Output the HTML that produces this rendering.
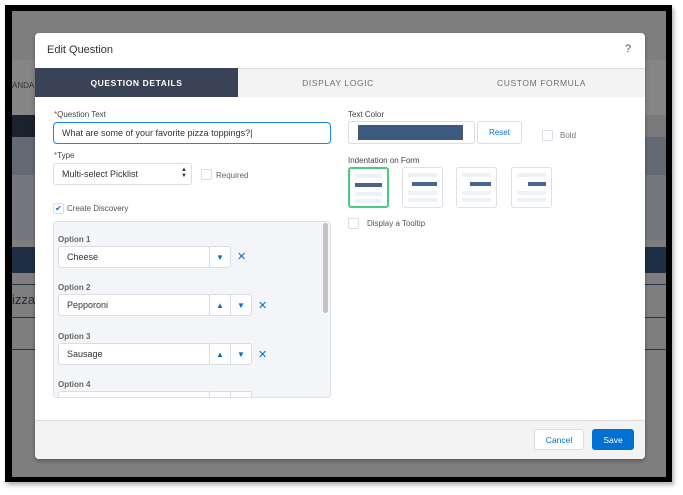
<!DOCTYPE html>
<html><head><style>
*{box-sizing:border-box;margin:0;padding:0}
body{width:683px;height:495px;background:#fff;position:relative;overflow:hidden;font-family:"Liberation Sans",sans-serif;color:#3e3e3c}
.a{position:absolute}
.frame{left:5px;top:5px;width:667px;height:477px;background:#000;box-shadow:2px 3px 4px rgba(0,0,0,.3)}
.bg{left:12px;top:11px;width:654px;height:466px;background:#7e7e7e;overflow:hidden}
.lbl{font-size:8px;color:#444}
.req{color:#c23934}
.inp{background:#fff;border:1px solid #d8dde6;border-radius:3px;font-size:9px;padding-left:8px;display:flex;align-items:center;color:#333}
.cb{width:11px;height:11px;border:1px solid #d8dde6;border-radius:2px;background:#fff}
.btn{background:#fff;border:1px solid #d8dde6;display:flex;align-items:center;justify-content:center}
.x{color:#0070d2;font-size:11px}
.ind{width:41px;height:41px;border:1px solid #dde1e8;border-radius:3px;background:#fff}
.ind i{position:absolute;height:4px;background:#eef1f6}
.ind b{position:absolute;height:4px;background:#4a6491}
.tab{font-size:8.5px;letter-spacing:.6px;color:#6f6f6f;text-align:center}
.ar{color:#0070d2;font-size:8px}
</style></head><body>
<div class="a frame"></div>
<div class="a bg">
 <div class="a" style="left:0;top:49px;width:654px;height:55px;background:#858585"></div>
 <div class="a" style="left:0;top:70px;font-size:8px;color:#333">ANDA</div>
 <div class="a" style="left:0;top:104px;width:654px;height:22px;background:#1c2130"></div>
 <div class="a" style="left:633px;top:104px;width:21px;height:22px;background:#7a7a7a"></div>
 <div class="a" style="left:0;top:126px;width:654px;height:38px;background:#646a74"></div>
 <div class="a" style="left:0;top:164px;width:654px;height:65px;background:#74787e"></div>
 <div class="a" style="left:0;top:236px;width:654px;height:26px;background:#1e2e45"></div>
 <div class="a" style="left:0;top:273px;width:654px;height:1px;background:#2a3344"></div>
 <div class="a" style="left:0;top:281px;font-size:13px;color:#1e2a3a">izza</div>
 <div class="a" style="left:0;top:306px;width:654px;height:1px;background:#2a3344"></div>
 <div class="a" style="left:0;top:338px;width:654px;height:1px;background:#2a3344"></div>
</div>
<div class="a" style="left:35px;top:33px;width:610px;height:426px;background:#fff;border-radius:4px;box-shadow:0 2px 4px rgba(0,0,0,.3);overflow:hidden">
 <div class="a" style="left:12px;top:11px;font-size:11px;color:#333">Edit Question</div>
 <div class="a" style="left:590px;top:10px;font-size:11px;color:#555">?</div>
 <div class="a" style="left:0;top:35px;width:610px;height:29px;background:#f3f3f3;border-top:1px solid #ddd"></div>
 <div class="a" style="left:0;top:35px;width:203px;height:29px;background:#3a4255"></div>
 <div class="a tab" style="left:0;top:45px;width:203px;color:#fff;font-weight:bold">QUESTION DETAILS</div>
 <div class="a tab" style="left:203px;top:45px;width:200px">DISPLAY LOGIC</div>
 <div class="a tab" style="left:403px;top:45px;width:207px">CUSTOM FORMULA</div>

 <div class="a lbl" style="left:19px;top:77px"><span class="req">*</span>Question Text</div>
 <div class="a inp" style="left:18px;top:89px;width:278px;height:22px;border-color:#1589ee;border-radius:4px">What are some of your favorite pizza toppings?|</div>
 <div class="a lbl" style="left:19px;top:118px"><span class="req">*</span>Type</div>
 <div class="a inp" style="left:18px;top:130px;width:139px;height:22px">Multi-select Picklist<span class="a" style="left:127px;top:3px;font-size:6px;line-height:6px">▲<br>▼</span></div>
 <div class="a cb" style="left:166px;top:136px"></div>
 <div class="a lbl" style="left:181px;top:138px;color:#666">Required</div>
 <div class="a cb" style="left:18px;top:170px;color:#0070d2;font-size:8px;line-height:9px;text-align:center">✔</div>
 <div class="a lbl" style="left:32px;top:171px;color:#555">Create Discovery</div>

 <div class="a" style="left:18px;top:188px;width:278px;height:177px;background:#f3f5f9;border:1px solid #dde1e8;border-radius:3px;overflow:hidden">
  <div class="a" style="left:269px;top:1px;width:5px;height:90px;background:#c4c4c4;border-radius:3px"></div>
  <div class="a lbl" style="left:4px;top:13px;font-weight:bold;color:#666">Option 1</div>
  <div class="a inp" style="left:4px;top:24px;width:152px;height:22px">Cheese</div>
  <div class="a btn ar" style="left:155px;top:24px;width:22px;height:22px;border-radius:0 3px 3px 0">▼</div>
  <div class="a x" style="left:183px;top:28px">✕</div>
  <div class="a lbl" style="left:4px;top:61px;font-weight:bold;color:#666">Option 2</div>
  <div class="a inp" style="left:4px;top:72px;width:152px;height:22px">Pepporoni</div>
  <div class="a btn ar" style="left:155px;top:72px;width:22px;height:22px">▲</div>
  <div class="a btn ar" style="left:176px;top:72px;width:22px;height:22px;border-radius:0 3px 3px 0">▼</div>
  <div class="a x" style="left:204px;top:77px">✕</div>
  <div class="a lbl" style="left:4px;top:110px;font-weight:bold;color:#666">Option 3</div>
  <div class="a inp" style="left:4px;top:121px;width:152px;height:22px">Sausage</div>
  <div class="a btn ar" style="left:155px;top:121px;width:22px;height:22px">▲</div>
  <div class="a btn ar" style="left:176px;top:121px;width:22px;height:22px;border-radius:0 3px 3px 0">▼</div>
  <div class="a x" style="left:204px;top:126px">✕</div>
  <div class="a lbl" style="left:4px;top:158px;font-weight:bold;color:#666">Option 4</div>
  <div class="a inp" style="left:4px;top:169px;width:152px;height:22px"></div>
  <div class="a btn" style="left:155px;top:169px;width:22px;height:22px"></div>
  <div class="a btn" style="left:176px;top:169px;width:22px;height:22px"></div>
 </div>

 <div class="a lbl" style="left:313px;top:77px">Text Color</div>
 <div class="a" style="left:313px;top:88px;width:127px;height:23px;border:1px solid #d8dde6;border-radius:3px;background:#fff"><div class="a" style="left:9px;top:3px;width:105px;height:15px;background:#3d5a80;border:1px solid #555"></div></div>
 <div class="a btn" style="left:442px;top:88px;width:45px;height:23px;border-radius:3px;color:#0070d2;font-size:8px">Reset</div>
 <div class="a cb" style="left:507px;top:97px"></div>
 <div class="a lbl" style="left:525px;top:98px;color:#777">Bold</div>
 <div class="a lbl" style="left:313px;top:123px">Indentation on Form</div>
 <div class="a ind" style="left:313px;top:134px;border:2px solid #4bca81"><i style="left:5px;top:5px;width:27px"></i><b style="left:5px;top:14px;width:27px"></b><i style="left:5px;top:23px;width:27px"></i><i style="left:5px;top:30px;width:27px"></i></div>
 <div class="a ind" style="left:367px;top:134px"><i style="left:5px;top:5px;width:29px"></i><b style="left:9px;top:14px;width:25px"></b><i style="left:5px;top:23px;width:29px"></i><i style="left:5px;top:30px;width:29px"></i></div>
 <div class="a ind" style="left:421px;top:134px"><i style="left:5px;top:5px;width:29px"></i><b style="left:13px;top:14px;width:21px"></b><i style="left:5px;top:23px;width:29px"></i><i style="left:5px;top:30px;width:29px"></i></div>
 <div class="a ind" style="left:476px;top:134px"><i style="left:5px;top:5px;width:29px"></i><b style="left:16px;top:14px;width:18px"></b><i style="left:5px;top:23px;width:29px"></i><i style="left:5px;top:30px;width:29px"></i></div>
 <div class="a cb" style="left:313px;top:185px"></div>
 <div class="a lbl" style="left:332px;top:186px;color:#555">Display a Tooltip</div>

 <div class="a" style="left:0;top:387px;width:610px;height:39px;background:#f3f3f3;border-top:1px solid #ddd"></div>
 <div class="a btn" style="left:499px;top:396px;width:50px;height:21px;border-radius:3px;color:#0070d2;font-size:8.5px">Cancel</div>
 <div class="a" style="left:557px;top:396px;width:42px;height:21px;border-radius:3px;background:#0070d2;color:#fff;font-size:8.5px;display:flex;align-items:center;justify-content:center">Save</div>
</div>
</body></html>
